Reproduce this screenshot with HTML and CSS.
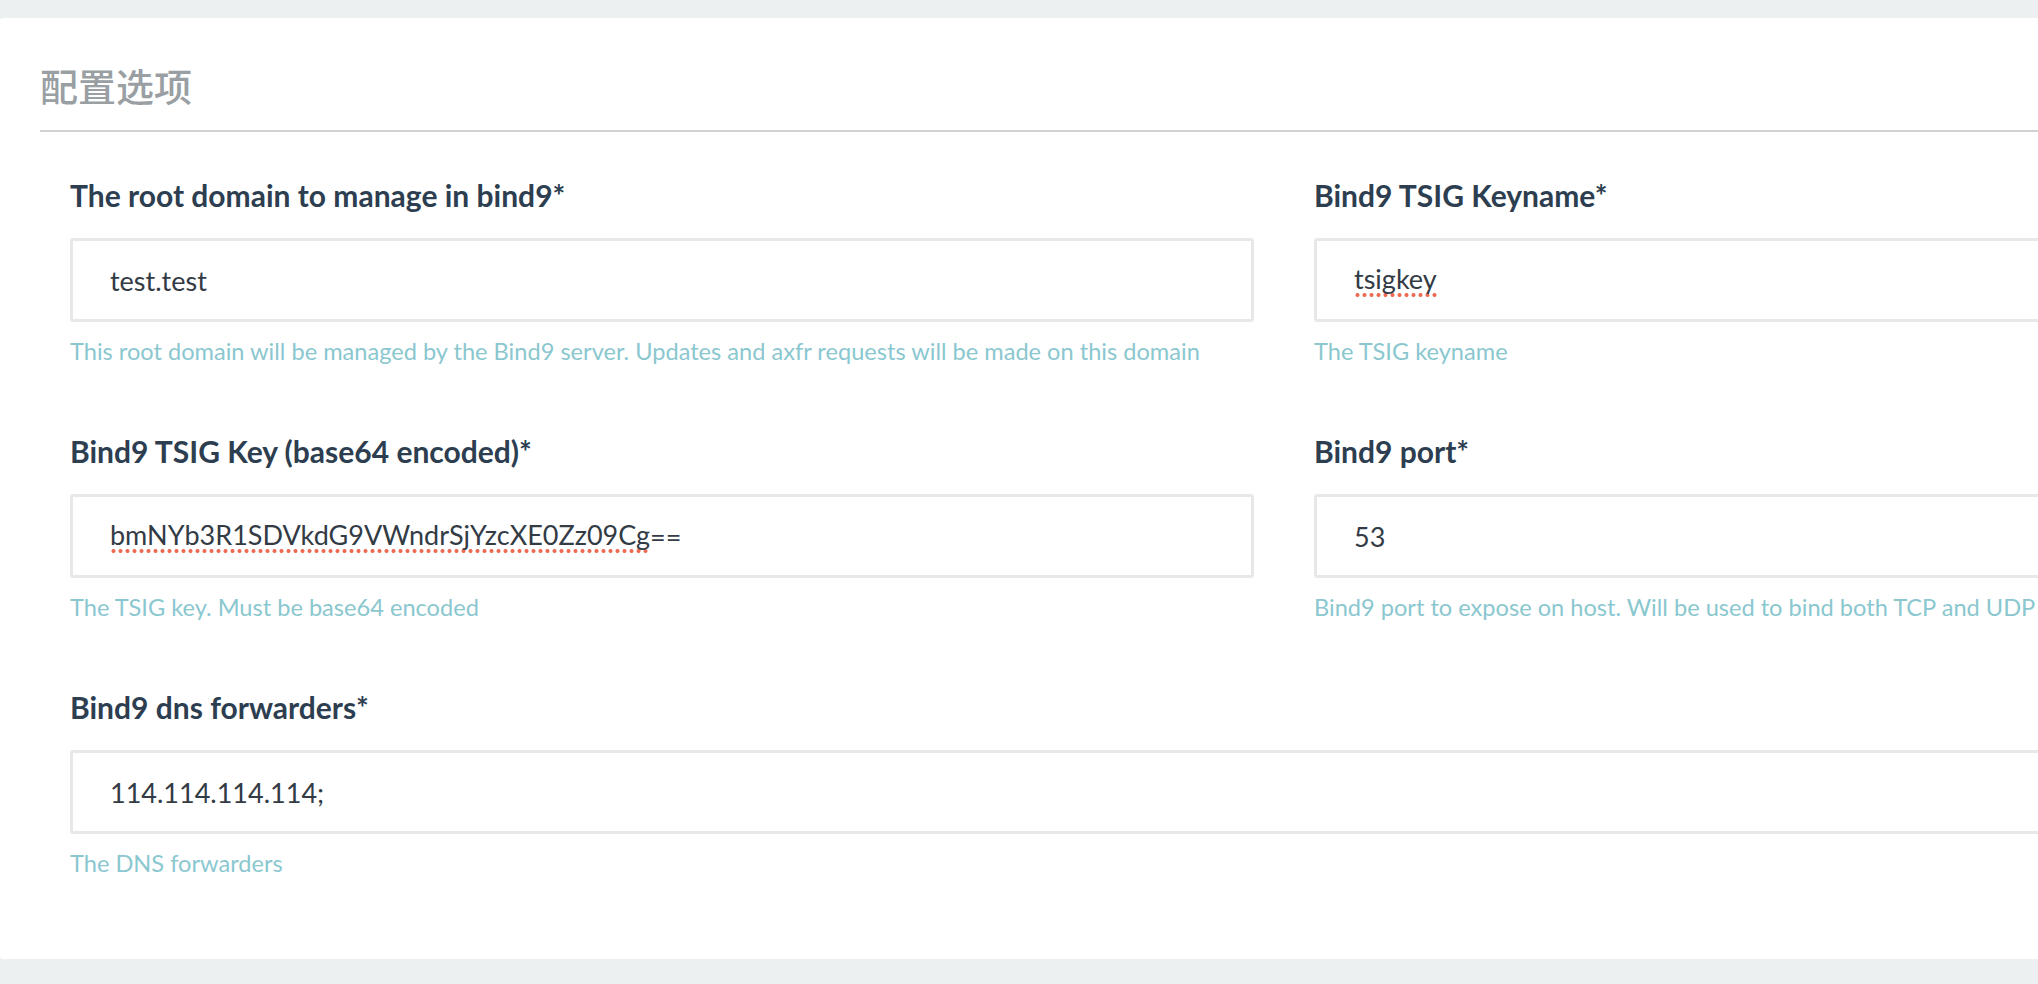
FILE: index.html
```html
<!DOCTYPE html>
<html lang="zh">
<head>
<meta charset="utf-8">
<title>配置选项</title>
<link rel="stylesheet" href="styles.css">
</head>
<body>
<div class="page">
  <section class="card">
    <header class="card-header">
      <h2 class="card-title">配置选项</h2>
    </header>
    <form class="form">
      <div class="field">
        <label class="field-label">The root domain to manage in bind9*</label>
        <div class="field-input">test.test</div>
        <p class="field-help">This root domain will be managed by the Bind9 server. Updates and axfr requests will be made on this domain</p>
      </div>
      <div class="field">
        <label class="field-label">Bind9 TSIG Keyname*</label>
        <div class="field-input"><span class="misspelled">tsigkey</span></div>
        <p class="field-help">The TSIG keyname</p>
      </div>
      <div class="field">
        <label class="field-label">Bind9 TSIG Key (base64 encoded)*</label>
        <div class="field-input"><span class="misspelled">bmNYb3R1SDVkdG9VWndrSjYzcXE0Zz09Cg</span>==</div>
        <p class="field-help">The TSIG key. Must be base64 encoded</p>
      </div>
      <div class="field">
        <label class="field-label">Bind9 port*</label>
        <div class="field-input">53</div>
        <p class="field-help">Bind9 port to expose on host. Will be used to bind both TCP and UDP</p>
      </div>
      <div class="field field-wide">
        <label class="field-label">Bind9 dns forwarders*</label>
        <div class="field-input">114.114.114.114;</div>
        <p class="field-help">The DNS forwarders</p>
      </div>
    </form>
  </section>
</div>
</body>
</html>
```

FILE: styles.css
```css
html, body {
  margin: 0;
  padding: 0;
  overflow: hidden;
}

body {
  background: #ecf0f1;
  font-family: Lato, "Noto Sans", "Noto Sans CJK SC", sans-serif;
  width: 2038px;
  height: 984px;
}

.page {
  padding-top: 18px;
}

.card {
  background: #ffffff;
  width: 2568px;
  border-radius: 3px;
  padding: 0 40px 81px 40px;
  box-sizing: border-box;
}

.card-header {
  padding-top: 44px;
  padding-bottom: 22px;
  border-bottom: 2px solid #cfd2d4;
}

.card-title {
  margin: 0;
  font-family: "Noto Sans CJK SC", "Noto Sans", sans-serif;
  font-size: 38px;
  line-height: 46px;
  font-weight: 500;
  color: #999fa3;
}

.form {
  display: grid;
  grid-template-columns: 1184px 1184px;
  column-gap: 60px;
  row-gap: 68px;
  padding: 46px 30px 0 30px;
}

.field {
  display: flex;
  flex-direction: column;
}

.field-wide {
  grid-column: 1 / span 2;
}

.field-label {
  font-size: 30px;
  line-height: 34px;
  font-weight: 700;
  color: #2c3e50;
  margin-bottom: 26px;
}

.field-input {
  box-sizing: border-box;
  height: 84px;
  border: 3px solid #e7e8e9;
  border-radius: 3px;
  padding: 0 37px;
  display: flex;
  align-items: center;
  font-size: 27px;
  color: #333b45;
  white-space: nowrap;
}

.misspelled {
  padding-bottom: 3px;
  background-image: radial-gradient(circle at 50% 50%, #ee6a52 0, #ee6a52 1.6px, rgba(238, 106, 82, 0) 2.4px);
  background-size: 7px 6px;
  background-repeat: repeat-x;
  background-position: 0 100%;
}

.field-help {
  margin: 14px 0 0 0;
  font-size: 23.6px;
  line-height: 30px;
  color: #8ac7cf;
}
```
